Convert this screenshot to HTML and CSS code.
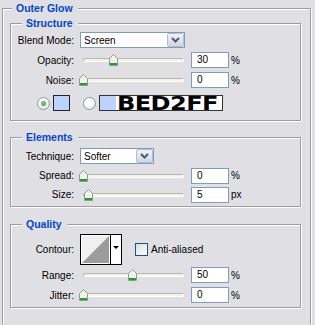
FILE: index.html
```html
<!DOCTYPE html>
<html lang="en">
<head>
    <meta charset="UTF-8">
    <title>Outer Glow</title>
    <link rel="stylesheet" href="styles.css">
</head>
<body>
    <fieldset class="group outer">
        <legend>Outer Glow</legend>

        <fieldset class="group structure">
            <legend>Structure</legend>
            <div class="row">
                <label class="lbl">Blend Mode:</label>
                <div class="select blend">
                    <span class="val">Screen</span>
                    <span class="drop"><svg width="9" height="6" viewBox="0 0 9 6"><path d="M1 1 L4.5 4.5 L8 1" fill="none" stroke="#4a5a7a" stroke-width="2"/></svg></span>
                </div>
            </div>
            <div class="row">
                <label class="lbl">Opacity:</label>
                <div class="slider"><div class="track"></div><span class="thumb" style="left: 30px;"></span></div>
                <div class="num">30</div><span class="unit">%</span>
            </div>
            <div class="row">
                <label class="lbl">Noise:</label>
                <div class="slider"><div class="track"></div><span class="thumb" style="left: 0px;"></span></div>
                <div class="num">0</div><span class="unit">%</span>
            </div>
            <div class="color-row">
                <span class="radio checked"></span>
                <span class="swatch"></span>
                <span class="radio"></span>
                <div class="gradient">
                    <span class="gradient-chip"></span>
                    <span class="gradient-text">BED2FF</span>
                </div>
            </div>
        </fieldset>

        <fieldset class="group elements">
            <legend>Elements</legend>
            <div class="row">
                <label class="lbl">Technique:</label>
                <div class="select technique">
                    <span class="val">Softer</span>
                    <span class="drop"><svg width="9" height="6" viewBox="0 0 9 6"><path d="M1 1 L4.5 4.5 L8 1" fill="none" stroke="#4a5a7a" stroke-width="2"/></svg></span>
                </div>
            </div>
            <div class="row short">
                <label class="lbl">Spread:</label>
                <div class="slider"><div class="track"></div><span class="thumb" style="left: 0px;"></span></div>
                <div class="num">0</div><span class="unit">%</span>
            </div>
            <div class="row short">
                <label class="lbl">Size:</label>
                <div class="slider"><div class="track"></div><span class="thumb" style="left: 5px;"></span></div>
                <div class="num">5</div><span class="unit">px</span>
            </div>
        </fieldset>

        <fieldset class="group quality">
            <legend>Quality</legend>
            <div class="row contour-row">
                <label class="lbl">Contour:</label>
                <div class="contour">
                    <svg width="42" height="31" viewBox="0 0 42 31">
                        <rect x="0.5" y="0.5" width="41" height="30" fill="#fff" stroke="#000"/>
                        <rect x="2" y="2" width="27" height="27" fill="#f0f0f0"/>
                        <polygon points="2,29 29,2 29,29" fill="#9c9c9c"/>
                        <line x1="30.5" y1="1" x2="30.5" y2="30" stroke="#000"/>
                        <polygon points="33,12 39,12 36,15" fill="#000"/>
                    </svg>
                </div>
                <span class="check"></span>
                <label class="check-lbl">Anti-aliased</label>
            </div>
            <div class="row">
                <label class="lbl">Range:</label>
                <div class="slider"><div class="track"></div><span class="thumb" style="left: 49px;"></span></div>
                <div class="num">50</div><span class="unit">%</span>
            </div>
            <div class="row">
                <label class="lbl">Jitter:</label>
                <div class="slider"><div class="track"></div><span class="thumb" style="left: 0px;"></span></div>
                <div class="num">0</div><span class="unit">%</span>
            </div>
        </fieldset>
    </fieldset>
</body>
</html>
```

FILE: styles.css
```css
body {
    margin: 0;
    padding: 1px 0 0 2px;
    height: 325px;
    box-sizing: border-box;
    overflow: hidden;
    background: #e0dfe3;
    font-family: "Liberation Sans", Arial, sans-serif;
    font-size: 10px;
    color: #000;
}
.group {
    margin: 0;
    padding: 0;
    min-width: 0;
    border: 1px solid #9d9da1;
    box-shadow: inset 1px 1px 0 #fff, 1px 1px 0 #fff;
}
.group > legend {
    padding: 0 5px 0 4px;
    font-size: 10.5px;
    font-weight: bold;
    line-height: 14px;
    color: #0046d5;
    background: #e0dfe3;
}
.outer {
    width: 309px;
    height: 324px;
    box-sizing: border-box;
    padding: 1px 8px 0 7px;
    border-bottom-color: transparent;
    box-shadow: inset 1px 1px 0 #fff, 1px 0 0 #fff;
}
.outer > legend {
    margin-left: 2px;
}
.structure, .elements, .quality {
    width: 291px;
    box-sizing: border-box;
}
.structure > legend, .elements > legend, .quality > legend {
    margin-left: 11px;
}
.structure {
    padding-bottom: 9px;
}
.elements {
    margin-top: 9px;
    padding-top: 2px;
    padding-bottom: 2px;
}
.quality {
    margin-top: 10px;
    padding-top: 3px;
    padding-bottom: 2px;
}
.row {
    display: flex;
    align-items: center;
    height: 20px;
}
.row.short {
    height: 19px;
}
.lbl {
    width: 63px;
    margin-right: 6px;
    text-align: right;
    white-space: nowrap;
}
.select {
    display: flex;
    align-items: center;
    height: 16px;
    box-sizing: border-box;
    border: 1px solid #7f9db9;
    background: #fff;
}
.select.blend {
    width: 105px;
}
.select.technique {
    width: 74px;
}
.select .val {
    flex: 1;
    padding-left: 3px;
}
.drop {
    display: flex;
    align-items: center;
    justify-content: center;
    width: 17px;
    height: 14px;
    box-sizing: border-box;
    border: 1px solid #b4bdd0;
    border-radius: 2px;
    background: linear-gradient(#f1f2f8, #d3d5e1);
}
.slider {
    position: relative;
    display: flex;
    align-items: center;
    width: 101px;
    height: 20px;
    margin-left: 3px;
}
.track {
    width: 100%;
    height: 4px;
    box-sizing: border-box;
    border: 1px solid #b9b9b3;
    border-bottom-color: #fff;
    border-right-color: #fff;
    border-radius: 2px;
    background: #f3f2e6;
}
.thumb {
    position: absolute;
    top: 4px;
    width: 9px;
    height: 12px;
    margin-left: -4px;
    background: url("data:image/svg+xml,%3Csvg xmlns='http://www.w3.org/2000/svg' width='9' height='12'%3E%3Cpath d='M0.5 4.5 L4.5 0.5 L8.5 4.5 V11.5 H0.5Z' fill='%23f2f3ee' stroke='%23909a90'/%3E%3Crect x='1' y='9' width='7' height='2' fill='%2321a121'/%3E%3C/svg%3E") no-repeat;
}
.num {
    width: 38px;
    height: 16px;
    box-sizing: border-box;
    margin-left: 7px;
    padding-left: 5px;
    border: 1px solid #7f9db9;
    background: #fff;
    line-height: 14px;
}
.unit {
    margin-left: 2px;
}
.color-row {
    display: flex;
    align-items: center;
    height: 16px;
    margin-top: 5px;
    padding-left: 26px;
}
.radio {
    width: 13px;
    height: 13px;
    box-sizing: border-box;
    border: 1px solid #8e99a6;
    border-radius: 50%;
    background: radial-gradient(circle at 35% 35%, #fff 30%, #dcdcd8);
    display: flex;
    align-items: center;
    justify-content: center;
}
.radio.checked::after {
    content: "";
    width: 5px;
    height: 5px;
    border-radius: 50%;
    background: radial-gradient(circle at 40% 40%, #6fdc6f, #219b21);
}
.swatch {
    width: 17px;
    height: 16px;
    box-sizing: border-box;
    margin: 0 13px 0 3px;
    border: 1px solid #222;
    background: #bed2ff;
}
.gradient {
    display: flex;
    align-items: center;
    width: 124px;
    height: 16px;
    box-sizing: border-box;
    margin-left: 3px;
    border: 1px solid #333;
    background: #fff;
}
.gradient-chip {
    width: 16px;
    height: 14px;
    flex: none;
    background: #bed2ff;
}
.gradient-text {
    display: block;
    font-family: "DejaVu Sans", sans-serif;
    font-size: 19px;
    font-weight: bold;
    line-height: 14px;
    letter-spacing: -0.5px;
    color: #000;
    transform: scaleX(1.27);
    transform-origin: left center;
    margin-left: 1px;
}
.contour-row {
    height: 31px;
}
.contour {
    display: flex;
    width: 42px;
    height: 31px;
}
.check {
    width: 13px;
    height: 13px;
    box-sizing: border-box;
    margin-left: 13px;
    border: 1px solid #1c5180;
    background: linear-gradient(135deg, #dcdcd7, #fff);
}
.check-lbl {
    margin-left: 3px;
}
```
